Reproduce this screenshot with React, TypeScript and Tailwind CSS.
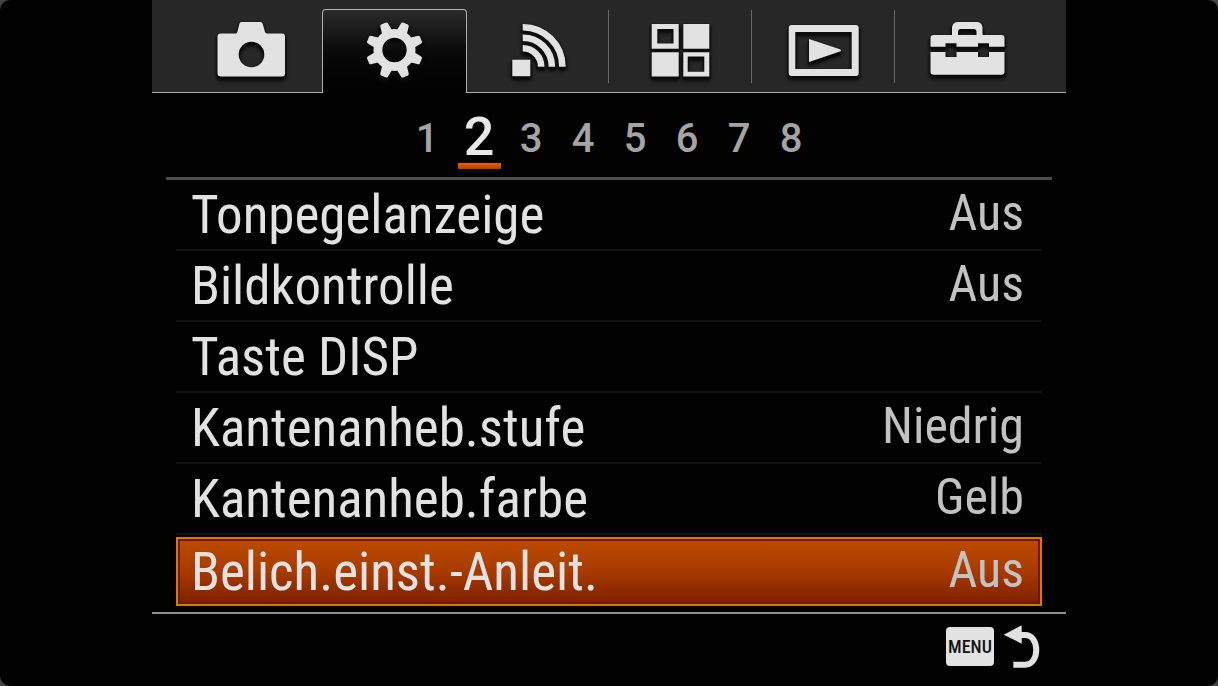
import React, { useState } from 'react';
import clsx from 'clsx';

const CameraIcon = () => (
  <svg viewBox="0 0 80 68" className="h-[68px] w-20">
    <path
      fillRule="evenodd"
      d="M10 16.5H24.5C26 16.5 26.3 15 26.8 13L28.3 7Q28.8 5 30.5 5H49.5Q51.2 5 51.8 7L53.5 13C54 15 54.5 16.5 56 16.5H71Q74 16.5 74 19.5V56.5Q74 59.5 71 59.5H10Q6.5 59.5 6.5 56.5V19.5Q6.5 16.5 10 16.5ZM40.5 24.7A12.8 12.8 0 1 0 40.5 50.3A12.8 12.8 0 1 0 40.5 24.7Z"
    />
  </svg>
);

const GearIcon = () => (
  <svg viewBox="0 0 80 68" className="h-[68px] w-20">
    <circle cx="40.5" cy="33" r="16.6" fill="none" stroke="currentColor" strokeWidth="8.8" />
    {[22.5, 67.5, 112.5, 157.5, 202.5, 247.5, 292.5, 337.5].map((angle) => (
      <path
        key={angle}
        transform={`translate(40.5 33) rotate(${angle})`}
        d="M-5.6 -18L-4.1 -27.2Q-3.8 -28.6 -2.6 -28.6H2.6Q3.8 -28.6 4.1 -27.2L5.6 -18Z"
      />
    ))}
  </svg>
);

const WirelessIcon = () => (
  <svg viewBox="0 0 80 68" className="h-[68px] w-20">
    <rect x="14.3" y="42.7" width="18" height="16.5" />
    <g fill="none" stroke="currentColor" strokeWidth="6.6">
      <path d="M24.7 31.2A18.5 18.5 0 0 1 43.2 49.7" />
      <path d="M24.7 20.7A29 29 0 0 1 53.9 49.7" />
      <path d="M24.7 10.2A39.5 39.5 0 0 1 64.4 49.7" />
    </g>
  </svg>
);

const AppsIcon = () => (
  <svg viewBox="0 0 80 68" className="h-[68px] w-20">
    <path
      fillRule="evenodd"
      d="M11.7 7H38.7V31.7H11.7ZM17.3 11.9V26.4H33.5V11.9ZM43.3 7H69.3V31.7H43.3ZM11.7 35.3H38.7V59.6H11.7ZM43.3 35.3H69.3V59.6H43.3ZM47.7 39.5V54.7H64.3V39.5Z"
    />
  </svg>
);

const PlaybackIcon = () => (
  <svg viewBox="0 0 80 68" className="h-[68px] w-20">
    <path
      fillRule="evenodd"
      d="M8.7 8H72.7Q75.7 8 75.7 11V56Q75.7 59 72.7 59H8.7Q5.7 59 5.7 56V11Q5.7 8 8.7 8ZM12.3 15V52H68.7V15Z"
    />
    <path d="M26 22L57 32.3Q59 33.5 57 34.6L26 45Z" />
  </svg>
);

const ToolboxIcon = () => (
  <svg viewBox="0 0 80 68" className="h-[68px] w-20">
    <path
      fillRule="evenodd"
      d="M6.5 18H25V10Q26 5 31 5H49.5Q54.5 5 55.5 10V18H74.5Q77.5 18 77.5 21V29.7H62V26.3H51V29.7H29.5V26.3H18.5V29.7H3.5V21Q3.5 18 6.5 18ZM31 18H49.5V14Q49 12 47 12H33.5Q31.5 12 31 14Z"
    />
    <path d="M3.5 35H18.5V40H29.5V35H51V40H62V35H77.5V54.7Q77.5 57.7 74.5 57.7H6.5Q3.5 57.7 3.5 54.7Z" />
  </svg>
);

const ReturnIcon = () => (
  <svg viewBox="0 0 38 44" className="h-11 w-[38px] fill-current">
    <path d="M1.7 10.7L19.7 1.3V19.7Z" />
    <path d="M19 11H23C38 11 38 40.8 23 40.8H11.3" fill="none" stroke="currentColor" strokeWidth="6" />
  </svg>
);

const tabs = [
  { id: 'camera', label: 'Kamera', icon: <CameraIcon /> },
  { id: 'custom', label: 'Benutzer', icon: <GearIcon /> },
  { id: 'wireless', label: 'Drahtlos', icon: <WirelessIcon /> },
  { id: 'apps', label: 'Applikation', icon: <AppsIcon /> },
  { id: 'playback', label: 'Wiedergabe', icon: <PlaybackIcon /> },
  { id: 'setup', label: 'Einstellung', icon: <ToolboxIcon /> }
];

const pages = [1, 2, 3, 4, 5, 6, 7, 8];

const settings = [
  { label: 'Tonpegelanzeige', value: 'Aus' },
  { label: 'Bildkontrolle', value: 'Aus' },
  { label: 'Taste DISP', value: '' },
  { label: 'Kantenanheb.stufe', value: 'Niedrig' },
  { label: 'Kantenanheb.farbe', value: 'Gelb' },
  { label: 'Belich.einst.-Anleit.', value: 'Aus' }
];

const App: React.FC = () => {
  const [activeTab, setActiveTab] = useState(1);
  const [page, setPage] = useState(2);
  const [selected, setSelected] = useState(5);

  return (
    <div className="min-h-screen bg-[#444444]">
      <main className="flex min-h-screen flex-col rounded-[10px] bg-[#020202] font-['Roboto_Condensed','Liberation_Sans',sans-serif] text-[#e2e2e2]">
        <div className="mx-auto flex w-full max-w-[914px] flex-1 flex-col">
          {/* Tabs */}
          <nav className="flex h-[93px] bg-[#272727]">
            <div className="w-7 border-b border-[#b0b0b0]" />
            {tabs.map((tab, index) => (
              <button
                key={tab.id}
                type="button"
                aria-label={tab.label}
                onClick={() => setActiveTab(index)}
                className={clsx(
                  'flex flex-1 items-center border-[#b0b0b0]',
                  index === activeTab
                    ? 'mt-[9px] -ml-px rounded-t border-x border-t bg-linear-to-b from-[#2b2b2b] via-[#0a0a0a] to-[#020202] pb-px'
                    : 'border-b pt-2.5'
                )}
              >
                <span className="flex flex-1 justify-center fill-current [filter:drop-shadow(0_1px_1px_#0c0c0c)_drop-shadow(0_2px_1px_#0c0c0c)_drop-shadow(0_1px_1px_#0c0c0c)]">
                  {tab.icon}
                </span>
                {index > activeTab && index < tabs.length - 1 && (
                  <span className="h-[73px] w-px self-start bg-[#686868]" />
                )}
              </button>
            ))}
            <div className="w-7 border-b border-[#b0b0b0]" />
          </nav>

          {/* Page numbers */}
          <nav className="flex h-[84px] justify-center font-['Roboto',sans-serif] font-medium">
            {pages.map((number) => (
              <button
                key={number}
                type="button"
                onClick={() => setPage(number)}
                className={clsx(
                  'flex w-[52px] flex-col items-center',
                  number === page ? 'pt-[17px] text-[54px]/[53px] text-[#e8e8e8]' : 'pt-[26px] text-[40px]/[40px] text-[#a4a4a4]'
                )}
              >
                {number}
                {number === page && <span className="h-1.5 w-[43px] bg-linear-to-b from-[#e86400] to-[#c03800]" />}
              </button>
            ))}
          </nav>
          <hr className="mx-3.5 h-[3px] border-0 bg-[#4c4c4c]" />

          {/* Settings */}
          <ul className="grid flex-1 auto-rows-fr px-6 pb-1.5">
            {settings.map((item, index) => (
              <li key={item.label} className={clsx('flex', index === selected ? 'pt-0.5' : 'border-b-2 border-[#121212]')}>
                <button
                  type="button"
                  onClick={() => setSelected(index)}
                  className={clsx(
                    'flex flex-1 items-center justify-between text-left',
                    index === selected
                      ? 'border-2 border-[#d87a00] bg-linear-to-b from-[#bc4c00] via-[#a83a00] to-[#7c2000] pr-4 pl-[13px] inset-ring-2 inset-ring-[#6e1600]'
                      : 'pr-[18px] pl-[15px]'
                  )}
                >
                  <span className="text-[53px]/[60px]">{item.label}</span>
                  <span className="pb-1 text-[50px]/[58px] text-[#c2c2c2]">{item.value}</span>
                </button>
              </li>
            ))}
          </ul>

          {/* Footer */}
          <footer className="flex h-[74px] items-start justify-end border-t-2 border-[#8e8e8e] pt-2.5 pr-[26px]">
            <button type="button" className="flex items-center gap-2">
              <span className="flex h-[39px] w-12 items-center justify-center rounded bg-[#e2e2e2] text-[18px] font-medium text-[#141414]">
                MENU
              </span>
              <ReturnIcon />
            </button>
          </footer>
        </div>
      </main>
    </div>
  );
};

export default App;
